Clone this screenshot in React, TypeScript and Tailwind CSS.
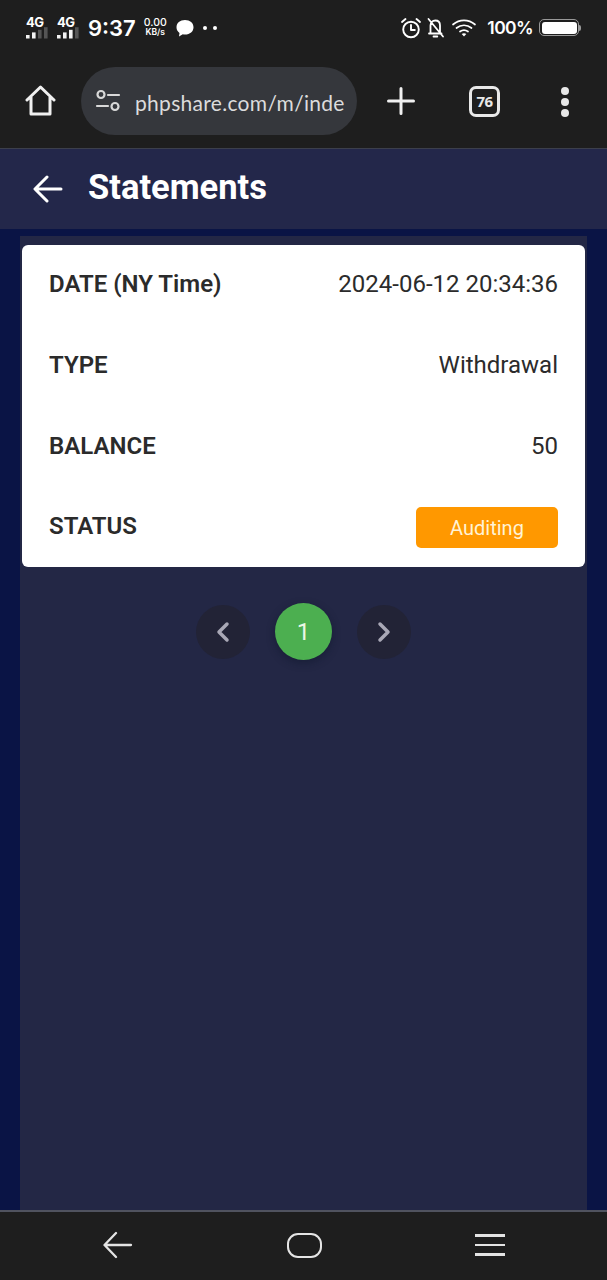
const font = "font-['Roboto','Liberation_Sans',sans-serif]";

const Signal = ({ bars }: { bars: number }) => (
  <div className="flex w-[24px] flex-col items-start">
    <span className="font-['Inter',sans-serif] text-[13px] leading-[12px] font-bold tracking-[-0.5px] text-white">4G</span>
    <svg width="24" height="12" viewBox="0 0 24 12" className="-mt-[1px]">
      {[0, 1, 2, 3].map((i) => (
        <rect
          key={i}
          x={i * 6}
          y={8 - i * 2.6}
          width="3.6"
          height={3.5 + i * 2.6}
          fill={i < bars ? "#f2f2f2" : "#555"}
        />
      ))}
    </svg>
  </div>
);

const StatusBar = () => (
  <div className="flex h-[55px] items-center justify-between pr-[26px] pl-[26px] text-white">
    <div className="flex items-center">
      <Signal bars={2} />
      <div className="w-[7px]" />
      <Signal bars={3} />
      <span className="ml-[7px] font-['Inter',sans-serif] text-[22px] leading-none font-semibold">9:37</span>
      <div className="ml-[8px] flex flex-col items-center font-['Inter',sans-serif] text-[10.5px] leading-[10px] font-medium">
        <span>0.00</span>
        <span className="text-[8.5px] leading-[9px] font-semibold">KB/s</span>
      </div>
      <svg width="20" height="20" viewBox="0 0 20 20" className="ml-[8px]" fill="#fff">
        <path d="M10 2c5 0 8.5 3 8.5 7.2 0 4.200-3.500 7.300-8.500 7.300-.8 0-1.500-.1-2.200-.3L4 18.500l.5-3.600C2.600 13.600 1.500 11.600 1.500 9.200 1.500 5 5 2 10 2z" />
      </svg>
      <div className="ml-[8px] flex gap-[6px]">
        <span className="size-[4px] rounded-full bg-white" />
        <span className="size-[4px] rounded-full bg-white" />
      </div>
    </div>
    <div className="flex items-center">
      <svg width="22" height="22" viewBox="0 0 22 22" fill="none" stroke="#fff" strokeWidth="1.900" strokeLinecap="round" strokeLinejoin="round">
        <circle cx="11" cy="12.500" r="7.800" />
        <path d="M11 8v5h3.800M2 5l3.500-3M20 5l-3.500-3" />
      </svg>
      <svg width="20" height="22" viewBox="0 0 20 22" fill="none" stroke="#fff" strokeWidth="1.800" strokeLinecap="round" strokeLinejoin="round" className="ml-[4px]">
        <path d="M3 16.500h12.500M4.500 16.500V8.500c0-2.800 2-5 4.800-5s4.700 2 4.700 5v8M7.500 19.500h3.800M2.500 2l14.500 17.500" />
      </svg>
      <svg width="26" height="20" viewBox="0 0 26 20" fill="none" stroke="#fff" strokeWidth="1.700" strokeLinecap="round" className="ml-[5px]">
        <path d="M2 6.500c6.500-5.500 15.500-5.500 22 0M5.500 10c4.500-3.700 10.500-3.700 15 0M9 13.500c2.500-1.800 5.500-1.800 8 0" />
        <path d="M13 18.500l-2.300-2.600c1.400-.8 3.200-.8 4.600 0z" fill="#fff" stroke="none" />
      </svg>
      <span className="ml-[10px] font-['Inter',sans-serif] text-[17.5px] leading-none font-semibold tracking-[-0.6px]">100%</span>
      <div className="ml-[6px] flex items-center">
        <div className="h-[17px] w-[40px] rounded-[5px] border border-[#999] p-[1.500px]">
          <div className="h-full w-full rounded-[3px] bg-white" />
        </div>
        <span className="h-[6px] w-[2px] rounded-r-sm bg-[#999]" />
      </div>
    </div>
  </div>
);

const BrowserBar = () => (
  <div className="flex h-[94px] items-start border-b border-[#3c3f4c] pt-[12px] pl-[25px] text-[#f0f0f0]">
    <svg width="31" height="32" viewBox="0 0 31 32" fill="none" stroke="#f0f0f0" strokeWidth="3" strokeLinecap="round" strokeLinejoin="round" className="mt-[18px]">
      <path d="M2 15 15.500 2 29 15M6 12v17h19V12" />
    </svg>
    <div className="ml-[25px] flex h-[68px] w-[276px] items-center rounded-full bg-[#35373c] pl-[14px]">
      <svg width="26" height="24" viewBox="0 0 26 24" fill="none" stroke="#d8d8d8" strokeWidth="2.200" strokeLinecap="round">
        <circle cx="6" cy="5.500" r="3.500" />
        <path d="M13 6h11M2 17h11" />
        <circle cx="20" cy="17.500" r="3.500" />
      </svg>
      <span className="mt-[3px] ml-[14px] font-['Lato',sans-serif] text-[21px] leading-none tracking-[0.3px] whitespace-nowrap text-[#dcdcdc]">
        phpshare.com/m/inde
      </span>
    </div>
    <svg width="28" height="28" viewBox="0 0 28 28" stroke="#f0f0f0" strokeWidth="3" strokeLinecap="round" className="mt-[20px] ml-[30px]">
      <path d="M14 1.500v25M1.500 14h25" />
    </svg>
    <div className="mt-[19px] ml-[54px] flex h-[31px] w-[31px] items-center justify-center rounded-[7px] border-[3px] border-[#e8e8e8] font-['Open_Sans',sans-serif] text-[15px] font-bold tracking-[-0.5px] text-[#e8e8e8]">
      76
    </div>
    <div className="mt-[20px] ml-[61px] flex flex-col gap-[3px]">
      <span className="size-[8px] rounded-full bg-[#e8e8e8]" />
      <span className="size-[8px] rounded-full bg-[#e8e8e8]" />
      <span className="size-[8px] rounded-full bg-[#e8e8e8]" />
    </div>
  </div>
);

const Row = ({ label, last, children }: { label: string; last?: boolean; children: React.ReactNode }) => (
  <div className={`flex items-center justify-between text-[24px] text-[#2b2b2b] ${last ? "h-[79px]" : "h-[81px]"}`}>
    <span className="pb-[3px] font-semibold">{label}</span>
    {children}
  </div>
);

const Pager = ({ dir }: { dir: "left" | "right" }) => (
  <button type="button" className="flex size-[54px] items-center justify-center rounded-full bg-[#222336]">
    <svg width="16" height="22" viewBox="0 0 16 22" fill="none" stroke="#a9a8b6" strokeWidth="3.500" strokeLinecap="round" strokeLinejoin="round">
      <path d={dir === "left" ? "M12 3 4 11l8 8" : "M4 3l8 8-8 8"} />
    </svg>
  </button>
);

const NavBar = () => (
  <div className="flex h-[70px] shrink-0 items-center border-t-2 border-[#50535f] bg-[#1e1e1e] pb-[2px]">
    <div className="flex w-full items-center justify-between pr-[102px] pl-[103px]">
      <svg width="30" height="28" viewBox="0 0 30 28" fill="none" stroke="#e4e4e4" strokeWidth="2.300" strokeLinecap="round" strokeLinejoin="round">
        <path d="M13 2 1.500 14 13 26M2 14h26" />
      </svg>
      <div className="h-[25px] w-[35px] rounded-[11px] border-[2.500px] border-[#e4e4e4]" />
      <div className="flex w-[30px] flex-col gap-[7px]">
        <span className="h-[2.500px] bg-[#e4e4e4]" />
        <span className="h-[2.500px] bg-[#e4e4e4]" />
        <span className="h-[2.500px] bg-[#e4e4e4]" />
      </div>
    </div>
  </div>
);

export default function App() {
  return (
    <div className={`flex h-[1280px] w-[607px] flex-col overflow-hidden bg-[#1e1e1e] ${font}`}>
      <StatusBar />
      <BrowserBar />
      <div className="flex h-[80px] shrink-0 items-center bg-[#23274a] pl-[33px] text-white">
        <svg width="30" height="28" viewBox="0 0 30 28" fill="none" stroke="#fff" strokeWidth="3" strokeLinecap="round" strokeLinejoin="round">
          <path d="M14 2 2 14l12 12M3 14h25" />
        </svg>
        <h1 className="ml-[25px] pb-[3px] text-[34.5px] leading-none font-bold">Statements</h1>
      </div>
      <div className="flex-1 bg-[#0a1445] px-[20px] pt-[7px]">
        <div className="h-full bg-[#232745] px-[2px] pt-[9px]">
          <div className="rounded-[6px] bg-white px-[27px]">
            <Row label="DATE (NY Time)">
              <span className="pb-[3px]">2024-06-12 20:34:36</span>
            </Row>
            <Row label="TYPE">
              <span className="pb-[3px]">Withdrawal</span>
            </Row>
            <Row label="BALANCE">
              <span className="pb-[3px]">50</span>
            </Row>
            <Row label="STATUS" last>
              <span className="flex h-[41px] w-[142px] items-center justify-center rounded-[5px] bg-[#ff9800] text-[20px] text-[#fff3d6]">
                Auditing
              </span>
            </Row>
          </div>
          <div className="mt-[36px] flex items-center justify-center gap-[25px]">
            <Pager dir="left" />
            <div className="flex size-[57px] items-center justify-center rounded-full bg-[#4caf50] text-[24px] text-[#eaf7e6] shadow-[0_3px_8px_rgba(10,20,40,0.45)]">
              1
            </div>
            <Pager dir="right" />
          </div>
        </div>
      </div>
      <NavBar />
    </div>
  );
}
